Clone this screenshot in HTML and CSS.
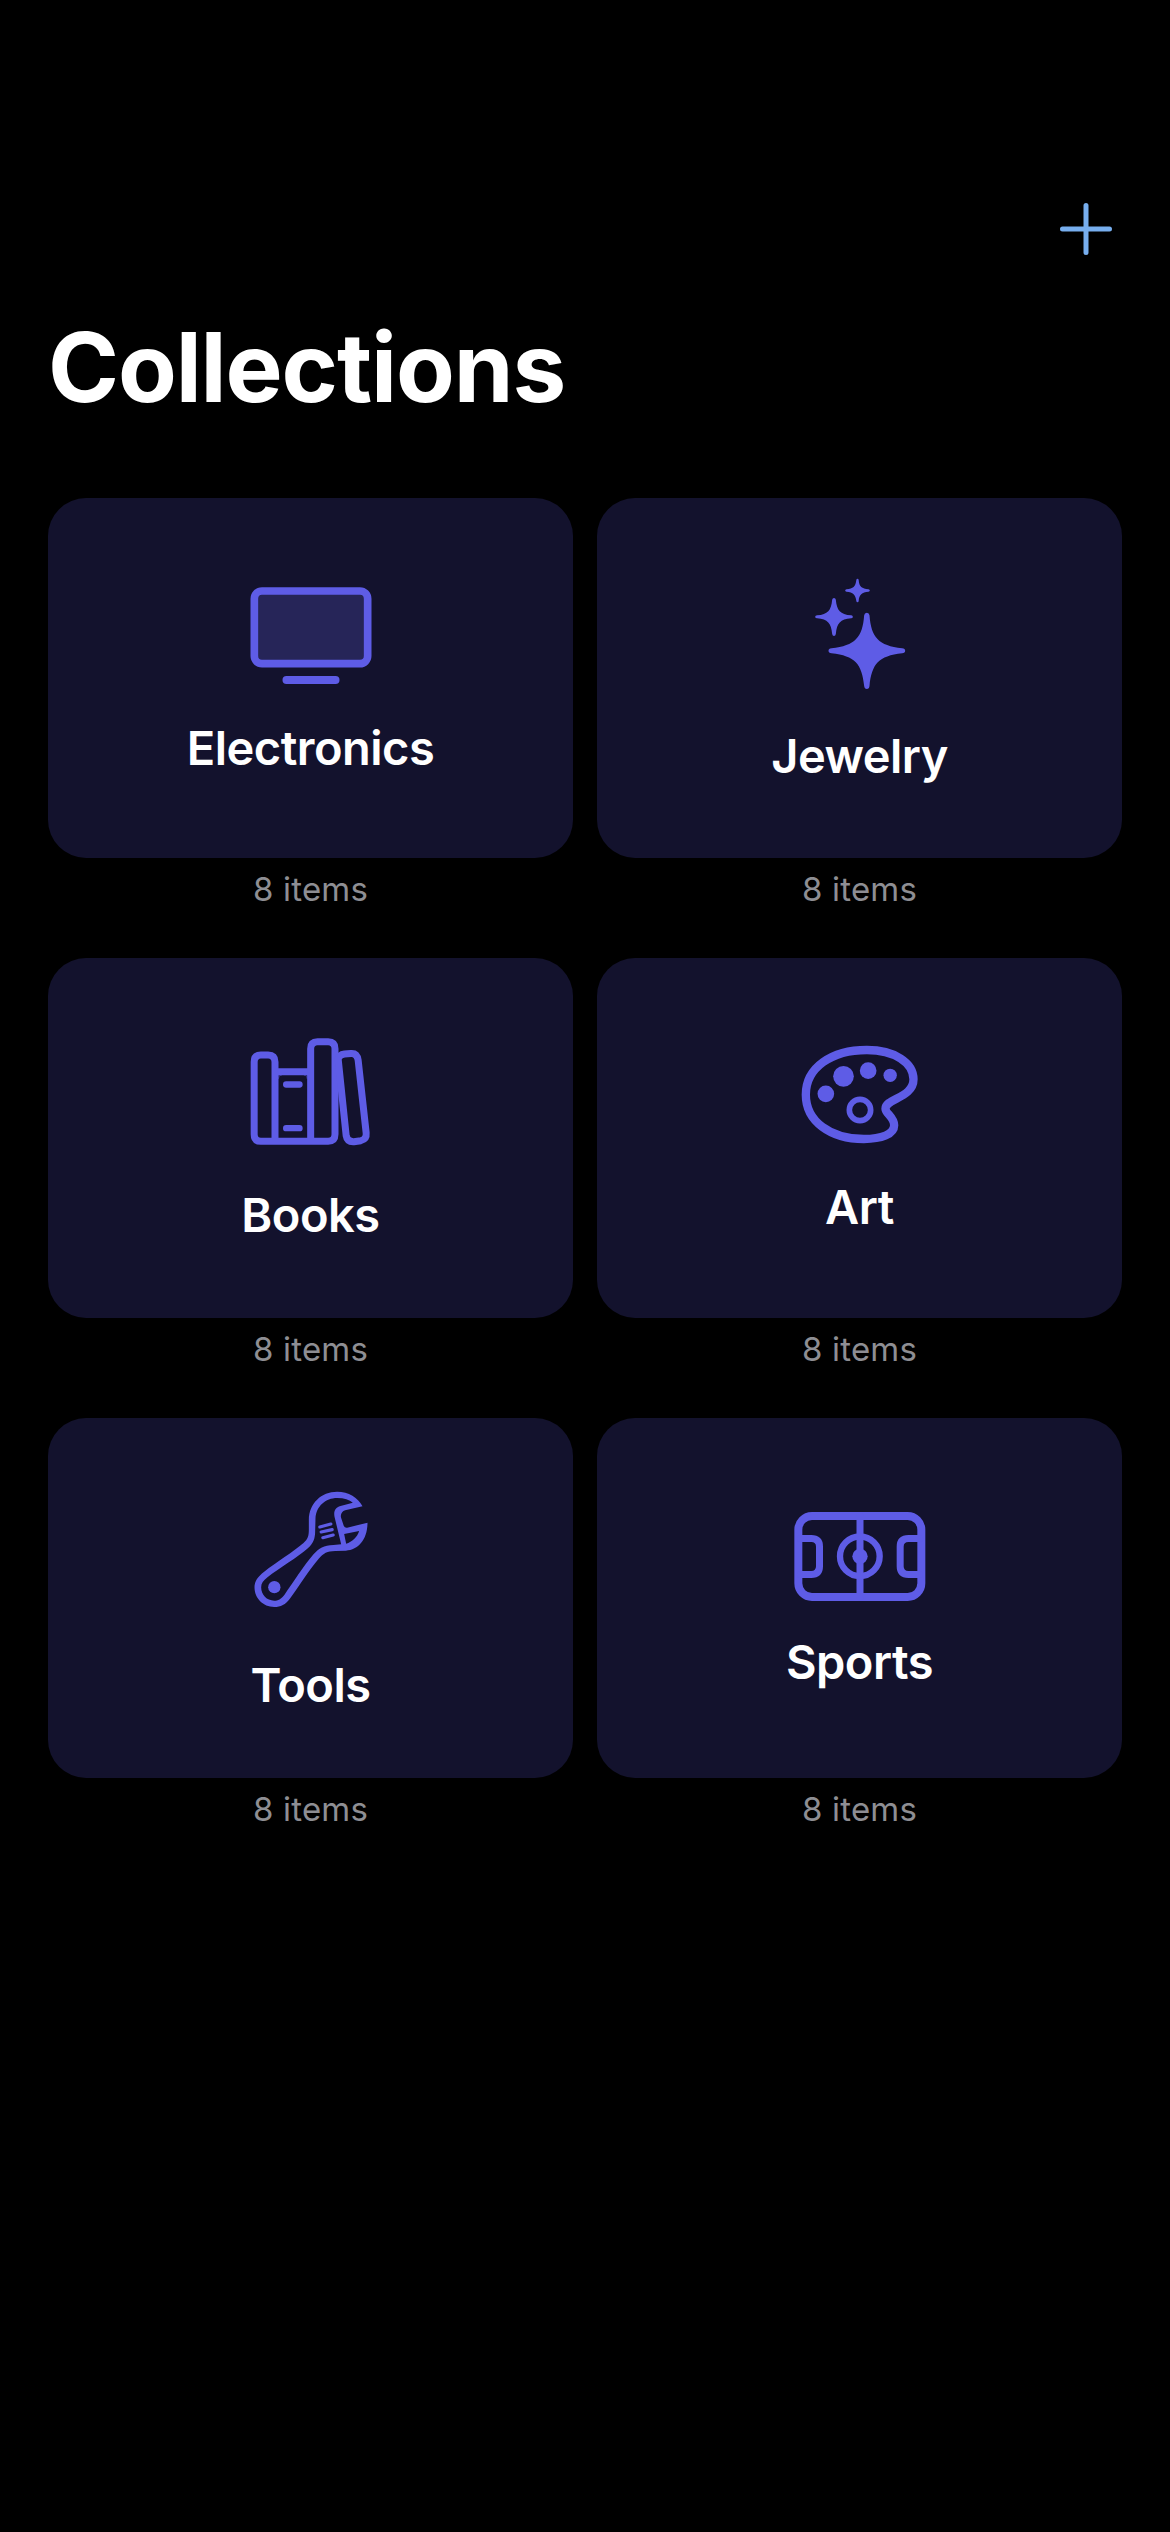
FILE: index.html
```html
<!DOCTYPE html>
<html lang="en">
<head>
<meta charset="utf-8">
<title>Collections</title>
<link rel="stylesheet" href="styles.css">
</head>
<body>
<header class="navbar">
  <button class="add" aria-label="Add">
    <svg class="add-icon" viewBox="0 0 54 54"><path d="M27 3.500v47M3.500 27h47"/></svg>
  </button>
</header>
<main class="content">
  <h1 class="title">Collections</h1>
  <div class="grid">
    <section class="collection">
      <div class="card">
        <svg class="icon icon-tv" viewBox="1.5 24 480 420">
          <rect class="screen" x="71.500" y="63" width="340" height="218" rx="23" stroke-width="23"/>
          <path d="M168 330H315" stroke-width="24"/>
        </svg>
        <h2 class="name">Electronics</h2>
      </div>
      <p class="count">8 items</p>
    </section>
    <section class="collection">
      <div class="card">
        <svg class="icon icon-sparkles" viewBox="-31.5 30 480 468">
          <g class="solid">
            <path d="M229 158Q236 158 237 166C242 233 264 257 335 265Q344 266 344 272.500Q344 279 335 280C264 288 244 312 237 378Q236 387 229 387Q222 387 221 378C214 312 194 288 123 280Q114 279 114 272.500Q114 266 123 265C194 257 216 233 221 166Q222 158 229 158Z"/>
            <path d="M130.500 114Q135 114 136 119C139 151 149 163 182 166Q187 167 187 170.500Q187 175 182 175C149 178 139 190 136 222Q135 228 130.500 228Q126 228 125 222C122 190 112 178 80 175Q74 175 74 170.500Q74 167 80 166C112 163 122 151 125 119Q126 114 130.500 114Z"/>
            <path d="M201 56Q204 56 204.500 60C206 80 214 86 234 88Q238 89 238 91.500Q238 94 234 95C214 97 206 103 204.500 123Q204 127 201 127Q198 127 197.500 123C195 103 188 97 168 95Q164 94 164 91.500Q164 89 168 88C188 86 195 80 197.500 60Q198 56 201 56Z"/>
          </g>
        </svg>
        <h2 class="name">Jewelry</h2>
      </div>
      <p class="count">8 items</p>
    </section>
    <section class="collection">
      <div class="card">
        <svg class="icon icon-books" viewBox="1.5 33 480 462">
          <path d="M133.500 364V126Q133.500 105 113 105H91Q71 105 71 126V343Q71 364 91 364H293Q313.500 364 313.500 343V86Q313.500 65 293 65H261Q240.500 65 240.500 86V364M133.500 155H240.500" stroke-width="21"/>
          <path d="M144 165H154Q144 165 144 175ZM230 165H220Q230 165 230 175Z" stroke-width="1"/>
          <path d="M167 193.500H207M167 324.500H207" stroke-width="19"/>
          <path d="M323 117Q326 104 342 102L361 100.500Q380 99 383 121L407 339Q409 358 391 362L370 365Q350 366 347 347L323 117" stroke-width="21"/>
        </svg>
        <h2 class="name">Books</h2>
      </div>
      <p class="count">8 items</p>
    </section>
    <section class="collection">
      <div class="card">
        <svg class="icon icon-palette" viewBox="-1.5 27 480 414">
          <path d="M259 60C342 60 399 98 399 148C399 204 315 205 315 236C315 251 341 261 341 286C341 313 303 327 250 327C150 327 76 274 76 194C76 113 153 60 259 60Z" stroke-width="25"/>
          <circle cx="238.500" cy="240" r="32" stroke-width="17"/>
          <g class="solid">
            <circle cx="136" cy="191.500" r="25"/><circle cx="189" cy="139" r="31"/>
            <circle cx="263" cy="122" r="25"/><circle cx="329" cy="136" r="20"/>
          </g>
        </svg>
        <h2 class="name">Art</h2>
      </div>
      <p class="count">8 items</p>
    </section>
    <section class="collection">
      <div class="card">
        <svg class="icon icon-wrench" viewBox="1.5 33 480 522">
          <path class="solid" fill-rule="evenodd" d="M396 109C383 83 354 65 320 65C272 65 236 100 235 149V180C235 198 232 207 219 219C189 245 137 277 101 305C82 320 72 333 72 352C72 385 98 411 131 411C151 411 165 403 178 386C205 350 235 301 264 267C279 249 290 244 314 243L346 242C385 239 411 207 411 158L350 173Q343 174 340 168L332 144Q329 134 335 127Q338 123 344 121ZM367 98L330 108C314 113 309 124 312 140L332 223L309 225C279 226 266 234 249 253C220 286 188 338 162 374C152 387 143 392 131 392C109 392 92 375 92 352C92 341 98 332 111 322C148 293 201 263 232 235C249 220 254 205 254 183L255 145C257 109 285 84 320 84C341 84 357 89 367 98ZM341 192L386 183C380 202 365 216 347 221Z"/>
          <circle class="solid" cx="131.500" cy="351.500" r="18.500"/>
          <path d="M268 171L301 162M272 186L305 179M277 203L308 195" stroke-width="9.500"/>
        </svg>
        <h2 class="name">Tools</h2>
      </div>
      <p class="count">8 items</p>
    </section>
    <section class="collection">
      <div class="card">
        <svg class="icon icon-field" viewBox="-1.5 42 480 384">
          <rect x="53.500" y="78" width="369" height="243" rx="41" stroke-width="24"/>
          <path d="M238.500 78V321M60 145.500H92Q117 145.500 117 170V229Q117 253.500 92 253.500H60M417 145.500H384Q359 145.500 359 170V229Q359 253.500 384 253.500H417" stroke-width="21"/>
          <circle cx="238" cy="199" r="59.500" stroke-width="19"/>
          <circle class="solid" cx="238.500" cy="199" r="23"/>
        </svg>
        <h2 class="name">Sports</h2>
      </div>
      <p class="count">8 items</p>
    </section>
  </div>
</main>
</body>
</html>
```

FILE: styles.css
```css
* { box-sizing: border-box; }

body {
  margin: 0;
  min-height: 2532px;
  background: #000;
  color: #fff;
  font-family: Inter, "Liberation Sans", sans-serif;
}

.navbar {
  display: flex;
  justify-content: flex-end;
  height: 307px;
  padding: 202px 57px 0 0;
}

.add {
  width: 54px;
  height: 54px;
  padding: 0;
  border: 0;
  background: none;
}

.add-icon {
  display: block;
  fill: none;
  stroke: #77aeee;
  stroke-width: 5;
  stroke-linecap: round;
}

.content { padding: 0 48px; }

.title {
  margin: 0 0 71px;
  font-size: 96px;
  font-weight: 700;
  line-height: 120px;
  letter-spacing: -1.1px;
}

.grid {
  display: grid;
  grid-template-columns: 1fr 1fr;
  gap: 40px 24px;
}

.card {
  display: flex;
  flex-direction: column;
  align-items: center;
  justify-content: center;
  height: 360px;
  border-radius: 38px;
  background: #13122d;
}

.icon {
  width: 160px;
  fill: none;
  stroke: #5e5ce6;
  stroke-linecap: round;
  stroke-linejoin: round;
}

.icon .solid { fill: #5e5ce6; stroke: none; }
.icon .screen { fill: #262558; }
.icon-tv { height: 140px; }
.icon-sparkles { height: 156px; }
.icon-books { height: 154px; }
.icon-palette { height: 138px; }
.icon-wrench { height: 174px; }
.icon-field { height: 128px; }

.name {
  margin: 0;
  font-size: 47px;
  font-weight: 600;
  line-height: 60px;
  letter-spacing: -0.5px;
}

.count {
  margin: 0;
  padding-top: 11px;
  color: #8e8e93;
  font-size: 33px;
  line-height: 40px;
  height: 60px;
  text-align: center;
  letter-spacing: 0.2px;
}
```
